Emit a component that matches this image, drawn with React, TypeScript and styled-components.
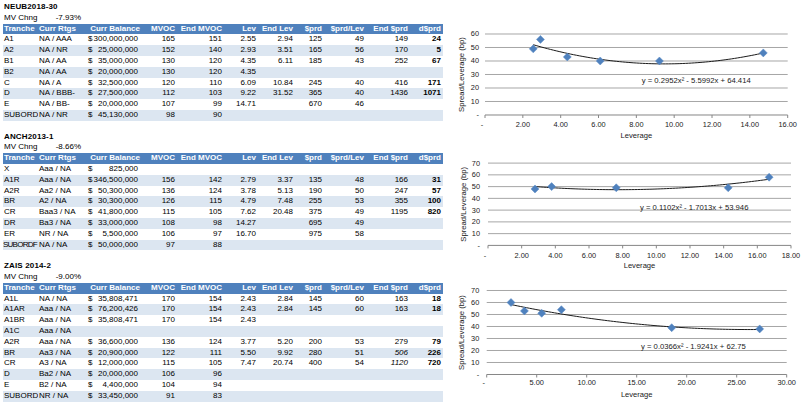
import React from "react";
import styled, { createGlobalStyle } from "styled-components";

const ROW_H = 10.8;
const COLS = "35px 48px 56px 35px 47px 34px 37px 29px 42px 44px 33px";

const GlobalStyle = createGlobalStyle`
  html, body {
    margin: 0;
    padding: 0;
    background: #ffffff;
    width: 801px;
    height: 407px;
    overflow: hidden;
  }
  body {
    font-family: "Liberation Sans", Arial, sans-serif;
    color: #000;
  }
`;

const Page = styled.div`
  display: flex;
  flex-direction: column;
  padding: 2px 0 0 3px;
`;

const Section = styled.section`
  display: flex;
  align-items: flex-start;
`;

const Sheet = styled.div<{ $gap: boolean }>`
  width: 440px;
  flex: none;
  display: flex;
  flex-direction: column;
  font-size: 8px;
  padding-bottom: ${(p) => (p.$gap ? `${ROW_H}px` : "0")};
`;

const Title = styled.div`
  height: ${ROW_H}px;
  line-height: ${ROW_H}px;
  font-weight: bold;
  padding-left: 1px;
  white-space: nowrap;
  letter-spacing: 0.15px;
`;

const Row = styled.div<{ $kind: "head" | "band" | "plain" }>`
  display: grid;
  grid-template-columns: ${COLS};
  height: ${ROW_H}px;
  line-height: ${ROW_H}px;
  background: ${(p) =>
    p.$kind === "head" ? "#4f81bd" : p.$kind === "band" ? "#dce6f1" : "transparent"};
  color: ${(p) => (p.$kind === "head" ? "#ffffff" : "#000000")};
  font-weight: ${(p) => (p.$kind === "head" ? "bold" : "normal")};
`;

const Cell = styled.div<{
  $right?: boolean;
  $bold?: boolean;
  $italic?: boolean;
  $pad?: number;
  $tight?: boolean;
}>`
  white-space: nowrap;
  overflow: hidden;
  text-align: ${(p) => (p.$right ? "right" : "left")};
  padding: ${(p) => (p.$right ? `0 ${p.$pad ?? 2}px 0 0` : p.$tight ? "0" : "0 0 0 1px")};
  font-weight: ${(p) => (p.$bold ? "bold" : "inherit")};
  font-style: ${(p) => (p.$italic ? "italic" : "normal")};
  letter-spacing: ${(p) => (p.$tight ? "-0.75px" : "normal")};
`;

const Money = styled.div`
  display: flex;
  justify-content: space-between;
  padding: 0 4px 0 2px;
  white-space: nowrap;
`;

const ChartSvg = styled.svg`
  flex: none;
  margin-left: 3px;
  overflow: visible;
  font-family: "Liberation Sans", Arial, sans-serif;
`;

type Val = string | { v: string; italic: true };

interface Block {
  title: string;
  mv: string;
  rows: Val[][];
}

const HEADERS = [
  "Tranche",
  "Curr Rtgs",
  "Curr Balance",
  "MVOC",
  "End MVOC",
  "Lev",
  "End Lev",
  "$prd",
  "$prd/Lev",
  "End $prd",
  "d$prd",
];

const it = (v: string): Val => ({ v, italic: true });

const BLOCKS: Block[] = [
  {
    title: "NEUB2018-30",
    mv: "-7.93%",
    rows: [
      ["A1", "NA / AAA", "300,000,000", "165", "151", "2.55", "2.94", "125", "49", "149", "24"],
      ["A2", "NA / NR", "25,000,000", "152", "140", "2.93", "3.51", "165", "56", "170", "5"],
      ["B1", "NA / AA", "35,000,000", "130", "120", "4.35", "6.11", "185", "43", "252", "67"],
      ["B2", "NA / AA", "20,000,000", "130", "120", "4.35", "", "", "", "", ""],
      ["C", "NA / A", "32,500,000", "120", "110", "6.09", "10.84", "245", "40", "416", "171"],
      ["D", "NA / BBB-", "27,500,000", "112", "103", "9.22", "31.52", "365", "40", "1436", "1071"],
      ["E", "NA / BB-", "20,000,000", "107", "99", "14.71", "", "670", "46", "", ""],
      ["SUBORD", "NA / NR", "45,130,000", "98", "90", "", "", "", "", "", ""],
    ],
  },
  {
    title: "ANCH2013-1",
    mv: "-8.66%",
    rows: [
      ["X", "Aaa / NA", "825,000", "", "", "", "", "", "", "", ""],
      ["A1R", "Aaa / NA", "346,500,000", "156", "142", "2.79", "3.37", "135", "48", "166", "31"],
      ["A2R", "Aa2 / NA", "50,300,000", "136", "124", "3.78", "5.13", "190", "50", "247", "57"],
      ["BR", "A2 / NA", "30,300,000", "126", "115", "4.79", "7.48", "255", "53", "355", "100"],
      ["CR", "Baa3 / NA", "41,800,000", "115", "105", "7.62", "20.48", "375", "49", "1195", "820"],
      ["DR", "Ba3 / NA", "33,000,000", "108", "98", "14.27", "", "695", "49", "", ""],
      ["ER", "NR / NA", "5,500,000", "106", "97", "16.70", "", "975", "58", "", ""],
      ["SUBORDF", "NA / NA", "50,000,000", "97", "88", "", "", "", "", "", ""],
    ],
  },
  {
    title: "ZAIS 2014-2",
    mv: "-9.00%",
    rows: [
      ["A1L", "NA / NA", "35,808,471", "170", "154", "2.43", "2.84", "145", "60", "163", "18"],
      ["A1AR", "Aaa / NA", "76,200,426", "170", "154", "2.43", "2.84", "145", "60", "163", "18"],
      ["A1BR", "Aaa / NA", "35,808,471", "170", "154", "2.43", "", "", "", "", ""],
      ["A1C", "Aaa / NA", "", "", "", "", "", "", "", "", ""],
      ["A2R", "Aaa / NA", "36,600,000", "136", "124", "3.77", "5.20", "200", "53", "279", "79"],
      ["BR", "Aa3 / NA", "20,900,000", "122", "111", "5.50", "9.92", "280", "51", it("506"), "226"],
      ["CR", "A3 / NA", "12,000,000", "115", "105", "7.47", "20.74", "400", "54", it("1120"), "720"],
      ["D", "Ba2 / NA", "20,000,000", "106", "96", "", "", "", "", "", ""],
      ["E", "B2 / NA", "4,400,000", "104", "94", "", "", "", "", "", ""],
      ["SUBORD", "NR / NA", "33,450,000", "91", "83", "", "", "", "", "", ""],
    ],
  },
];

interface ChartSpec {
  height: number;
  plot: { left: number; right: number; top: number; bottom: number };
  xMax: number;
  xStep: number;
  yMax: number;
  yLabelRight: number;
  yTitle: { x: number; y: number };
  xLabelY: number;
  xTitleY: number;
  points: [number, number][];
  coef: [number, number, number];
  range: [number, number];
  eq: string;
  eqPos: { x: number; y: number };
}

const CHARTS: ChartSpec[] = [
  {
    height: 12 * ROW_H,
    plot: { left: 39, right: 341.7, top: 32, bottom: 113 },
    xMax: 16,
    xStep: 2,
    yMax: 60,
    yLabelRight: 33,
    yTitle: { x: 15, y: 72.5 },
    xLabelY: 123,
    xTitleY: 133.5,
    points: [
      [2.55, 49],
      [2.93, 56],
      [4.35, 43],
      [6.09, 40],
      [9.22, 40],
      [14.71, 46],
    ],
    coef: [0.2952, -5.5992, 64.414],
    range: [2.55, 14.71],
    eq: "y = 0.2952x² - 5.5992x + 64.414",
    eqPos: { x: 195.7, y: 79 },
  },
  {
    height: 12 * ROW_H,
    plot: { left: 42, right: 345, top: 31.1, bottom: 113.4 },
    xMax: 18,
    xStep: 2,
    yMax: 70,
    yLabelRight: 34,
    yTitle: { x: 17.3, y: 72.3 },
    xLabelY: 123.4,
    xTitleY: 133.4,
    points: [
      [2.79, 48],
      [3.78, 50],
      [7.62, 49],
      [14.27, 49],
      [16.7, 58],
    ],
    coef: [0.1102, -1.7013, 53.946],
    range: [2.79, 16.7],
    eq: "y = 0.1102x² - 1.7013x + 53.946",
    eqPos: { x: 194, y: 75.1 },
  },
  {
    height: 13 * ROW_H,
    plot: { left: 40.7, right: 340.7, top: 29.5, bottom: 113.5 },
    xMax: 30,
    xStep: 5,
    yMax: 70,
    yLabelRight: 33.3,
    yTitle: { x: 15, y: 71.5 },
    xLabelY: 121.8,
    xTitleY: 133.8,
    points: [
      [2.43, 60],
      [3.77, 53],
      [5.5, 51],
      [7.47, 54],
      [18.5, 39],
      [27.3, 38],
    ],
    coef: [0.0366, -1.9241, 62.75],
    range: [2.43, 27.3],
    eq: "y = 0.0366x² - 1.9241x + 62.75",
    eqPos: { x: 195, y: 85.5 },
  },
];

const TXT = "#1a1a1a";

function Chart({ spec }: { spec: ChartSpec }) {
  const { plot, xMax, xStep, yMax } = spec;
  const sx = (x: number) => plot.left + (x / xMax) * (plot.right - plot.left);
  const sy = (y: number) => plot.bottom - (y / yMax) * (plot.bottom - plot.top);
  const yTicks: number[] = [];
  for (let v = 0; v <= yMax; v += 10) yTicks.push(v);
  const xTicks: number[] = [];
  for (let v = 0; v <= xMax + 1e-9; v += xStep) xTicks.push(v);
  const [a, b, c] = spec.coef;
  const trend: string[] = [];
  const n = 80;
  for (let i = 0; i <= n; i++) {
    const x = spec.range[0] + ((spec.range[1] - spec.range[0]) * i) / n;
    trend.push(`${sx(x).toFixed(2)},${sy(a * x * x + b * x + c).toFixed(2)}`);
  }
  const midX = (plot.left + plot.right) / 2;
  return (
    <ChartSvg width={355} height={spec.height} viewBox={`0 0 355 ${spec.height}`}>
      {yTicks
        .filter((v) => v > 0)
        .map((v) => (
          <line
            key={`g${v}`}
            x1={plot.left}
            x2={plot.right}
            y1={sy(v)}
            y2={sy(v)}
            stroke="#a6a6a6"
            strokeWidth={1}
          />
        ))}
      <line x1={plot.left} x2={plot.right} y1={plot.bottom} y2={plot.bottom} stroke="#868686" strokeWidth={1} />
      {xTicks.map((v) => (
        <line
          key={`t${v}`}
          x1={sx(v)}
          x2={sx(v)}
          y1={plot.bottom}
          y2={plot.bottom + 3}
          stroke="#868686"
          strokeWidth={1}
        />
      ))}
      {yTicks.map((v) => (
        <text
          key={`yl${v}`}
          x={spec.yLabelRight}
          y={sy(v)}
          fontSize={7.4}
          fill={TXT}
          textAnchor="end"
          dominantBaseline="central"
        >
          {v === 0 ? "-" : String(v)}
        </text>
      ))}
      {xTicks.map((v) => (
        <text
          key={`xl${v}`}
          x={v === 0 ? sx(v) - 3 : sx(v)}
          y={spec.xLabelY}
          fontSize={7.4}
          fill={TXT}
          textAnchor="middle"
          dominantBaseline="central"
        >
          {v === 0 ? "-" : v.toFixed(2)}
        </text>
      ))}
      <text
        x={midX}
        y={spec.xTitleY}
        fontSize={7.6}
        fill={TXT}
        textAnchor="middle"
        dominantBaseline="central"
      >
        Leverage
      </text>
      <text
        transform={`translate(${spec.yTitle.x} ${spec.yTitle.y}) rotate(-90)`}
        fontSize={7.7}
        fill={TXT}
        textAnchor="middle"
        dominantBaseline="central"
      >
        Spread/Leverage (bp)
      </text>
      <polyline points={trend.join(" ")} fill="none" stroke="#1a1a1a" strokeWidth={1} />
      {spec.points.map(([x, y], i) => {
        const px = sx(x);
        const py = sy(y);
        const r = 4;
        return (
          <polygon
            key={`p${i}`}
            points={`${px},${py - r} ${px + r},${py} ${px},${py + r} ${px - r},${py}`}
            fill="#4f81bd"
            stroke="#5b8bc6"
            strokeWidth={0.5}
          />
        );
      })}
      <text
        x={spec.eqPos.x}
        y={spec.eqPos.y}
        fontSize={7.7}
        fill={TXT}
        dominantBaseline="central"
      >
        {spec.eq}
      </text>
    </ChartSvg>
  );
}

function renderVal(v: Val): { text: string; italic: boolean } {
  if (typeof v === "string") return { text: v, italic: false };
  return { text: v.v, italic: true };
}

function Table({ block, gap }: { block: Block; gap: boolean }) {
  return (
    <Sheet $gap={gap}>
      <Title>{block.title}</Title>
      <Row $kind="plain">
        <Cell>MV Chng</Cell>
        <Cell $right $pad={5}>
          {block.mv}
        </Cell>
      </Row>
      <Row $kind="head">
        {HEADERS.map((h, i) => (
          <Cell key={h} $right={i > 1}>
            {h}
          </Cell>
        ))}
      </Row>
      {block.rows.map((r, ri) => (
        <Row key={ri} $kind={ri % 2 === 1 ? "band" : "plain"}>
          {r.map((v, ci) => {
            const { text, italic } = renderVal(v);
            if (ci === 2) {
              return text ? (
                <Money key={ci}>
                  <span>$</span>
                  <span>{text}</span>
                </Money>
              ) : (
                <Money key={ci} />
              );
            }
            return (
              <Cell
                key={ci}
                $right={ci > 1}
                $bold={ci === 10}
                $italic={italic}
                $tight={ci === 0 && text.length > 6}
              >
                {text}
              </Cell>
            );
          })}
        </Row>
      ))}
    </Sheet>
  );
}

export default function App() {
  return (
    <>
      <GlobalStyle />
      <Page>
        {BLOCKS.map((b, i) => (
          <Section key={b.title}>
            <Table block={b} gap={i < BLOCKS.length - 1} />
            <Chart spec={CHARTS[i]} />
          </Section>
        ))}
      </Page>
    </>
  );
}
